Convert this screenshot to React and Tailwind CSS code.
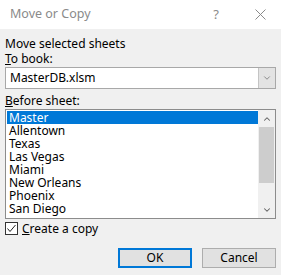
import { ChevronDown, ChevronUp } from 'lucide-react'

const sheets = ['Master', 'Allentown', 'Texas', 'Las Vegas', 'Miami', 'New Orleans', 'Phoenix', 'San Diego']

function App() {
  return (
    <div className="w-[281px] h-[275px] bg-[#f0f0f0] text-[12px] text-black font-['Noto_Sans',sans-serif] overflow-hidden">
      <div className="h-[29px] bg-white flex items-center pl-[10px]">
        <span className="text-[#8a8a8a] text-[12.5px]">Move or Copy</span>
        <span className="ml-auto text-[#8a8a8a] text-[13px] mr-[36px]">?</span>
        <svg width="11" height="11" viewBox="0 0 11 11" className="mr-[15px]">
          <path d="M0.5 0.5 L10.5 10.5 M10.5 0.5 L0.5 10.5" stroke="#8a8a8a" strokeWidth="1" fill="none" />
        </svg>
      </div>

      <div className="px-[5px]">
        <p className="mt-[7px] leading-[15px]">Move selected sheets</p>
        <p className="leading-[15px]"><span className="underline">T</span>o book:</p>

        <div className="mt-[1px] h-[22px] flex border border-[#a8a8a8] bg-white">
          <span className="flex-1 pl-[4px] leading-[20px]">MasterDB.xlsm</span>
          <span className="w-[17px] flex items-center justify-center bg-[#e3e3e3] border-l border-[#c4c4c4]">
            <ChevronDown className="w-[10px] h-[10px] text-[#555]" strokeWidth={1.5} />
          </span>
        </div>

        <p className="mt-[4px] leading-[15px]"><span className="underline">B</span>efore sheet:</p>

        <div className="mt-[1px] h-[110px] flex border border-[#8c8c8c] bg-white">
          <div className="flex-1 pt-[1px] pl-[1px]">
            {sheets.map((name, i) => (
              <div
                key={name}
                className={i === 0 ? 'h-[13px] leading-[13px] pl-[2px] bg-[#0078d7] text-white' : 'h-[13px] leading-[13px] pl-[2px]'}
              >
                {name}
              </div>
            ))}
          </div>
          <div className="w-[17px] bg-[#f0f0f0] flex flex-col">
            <span className="h-[17px] flex items-center justify-center">
              <ChevronUp className="w-[10px] h-[10px] text-[#606060]" strokeWidth={2.5} />
            </span>
            <span className="h-[56px] mx-[1px] bg-[#cdcdcd]" />
            <span className="flex-1" />
            <span className="h-[17px] flex items-center justify-center">
              <ChevronDown className="w-[10px] h-[10px] text-[#606060]" strokeWidth={2.5} />
            </span>
          </div>
        </div>

        <label className="mt-[3px] flex items-center h-[13px]">
          <span className="w-[13px] h-[13px] border border-[#333] bg-white flex items-center justify-center">
            <svg width="11" height="11" viewBox="0 0 11 11">
              <path d="M1.5 5.5 L4 8.5 L9.5 2" stroke="#222" strokeWidth="1" fill="none" />
            </svg>
          </span>
          <span className="ml-[4px]"><span className="underline">C</span>reate a copy</span>
        </label>

        <div className="mt-[13px] flex justify-end gap-[10px]">
          <button className="w-[74px] h-[20px] bg-[#e1e1e1] border-2 border-[#0078d7] text-[12px] leading-[16px]">OK</button>
          <button className="w-[74px] h-[20px] bg-[#e1e1e1] border border-[#adadad] text-[12px] leading-[18px]">Cancel</button>
        </div>
      </div>
    </div>
  )
}

export default App
